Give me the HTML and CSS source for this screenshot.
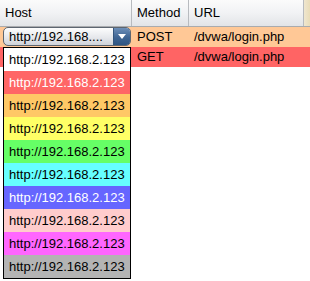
FILE: index.html
```html
<!DOCTYPE html>
<html lang="en">
<head>
    <meta charset="UTF-8">
    <title>Hosts</title>
    <link rel="stylesheet" href="styles.css">
</head>
<body>
    <div class="grid">
        <div class="head">
            <div class="cell c-host">Host</div>
            <div class="cell c-method">Method</div>
            <div class="cell c-url">URL</div>
            <div class="cell c-rest"></div>
        </div>
        <div class="row post">
            <div class="cell c-host">
                <div class="combo">
                    <span class="combo-text">http://192.168....</span>
                    <span class="combo-btn"><span class="tri"></span></span>
                </div>
            </div>
            <div class="cell c-method">POST</div>
            <div class="cell c-url">/dvwa/login.php</div>
        </div>
        <div class="row get">
            <div class="cell c-host"></div>
            <div class="cell c-method">GET</div>
            <div class="cell c-url">/dvwa/login.php</div>
        </div>

        <ul class="popup">
            <li class="item white">http://192.168.2.123</li>
            <li class="item red">http://192.168.2.123</li>
            <li class="item orange">http://192.168.2.123</li>
            <li class="item yellow">http://192.168.2.123</li>
            <li class="item green">http://192.168.2.123</li>
            <li class="item cyan">http://192.168.2.123</li>
            <li class="item blue">http://192.168.2.123</li>
            <li class="item pink">http://192.168.2.123</li>
            <li class="item magenta">http://192.168.2.123</li>
            <li class="item gray">http://192.168.2.123</li>
        </ul>
    </div>
</body>
</html>
```

FILE: styles.css
```css
*{
    margin: 0;
    padding: 0;
    box-sizing: border-box;
}
html, body{
    height: 100%;
}
body{
    background: #fff;
    font-family: "Liberation Sans", Arial, sans-serif;
    font-size: 13px;
    color: #000;
}
.grid{
    position: relative;
    width: 310px;
    height: 281px;
}
.head{
    display: flex;
    height: 27px;
    background: linear-gradient(#fbfbfb, #f1f2f4 50%, #e2e4e7);
    border-bottom: 1px solid #a9abae;
}
.head .cell{
    line-height: 26px;
    padding-left: 5px;
    border-right: 1px solid #b8bbbf;
}
.head .c-rest{
    border-right: none;
    background: linear-gradient(90deg, #efe6cf, #e9dcb8);
}
.c-host{ width: 132px; }
.c-method{ width: 57px; }
.c-url{ width: 115px; }
.c-rest{ flex: 1; }
.row{
    display: flex;
    height: 20px;
}
.row .cell{
    line-height: 20px;
    padding-left: 5px;
}
.row .c-host{ padding-left: 3px; }
.post{ background: #ffc896; }
.get{ background: #ff6464; }
.combo{
    display: flex;
    height: 19px;
    width: 128px;
    border: 1px solid #5d6670;
    border-radius: 5px;
    background: linear-gradient(#fdfdfd, #e6e8ec 55%, #cfd3d9);
    overflow: hidden;
}
.combo-text{
    flex: 1;
    padding-left: 5px;
    line-height: 17px;
    white-space: nowrap;
}
.combo-btn{
    width: 17px;
    display: flex;
    align-items: center;
    justify-content: center;
    background: linear-gradient(#6d8fb8, #3f6593 55%, #2f5582);
    border-left: 1px solid #34567d;
}
.tri{
    width: 0;
    height: 0;
    border-left: 4px solid transparent;
    border-right: 4px solid transparent;
    border-top: 5px solid #fff;
}
.popup{
    position: absolute;
    z-index: 2;
    left: 3px;
    top: 47px;
    width: 128px;
    border: 1px solid #000;
    list-style: none;
    background: #fff;
}
.item{
    display: block;
    height: 23px;
    line-height: 23px;
    padding-left: 5px;
    font-size: 13px;
    white-space: nowrap;
}
.white{ background: #fff; }
.red{ background: #ff6666; color: #fff; }
.orange{ background: #ffc866; }
.yellow{ background: #ffff66; }
.green{ background: #66ff66; }
.cyan{ background: #66ffff; }
.blue{ background: #6666ff; color: #fff; }
.pink{ background: #ffcccc; }
.magenta{ background: #ff66ff; }
.gray{ background: #b4b4b4; }
```
